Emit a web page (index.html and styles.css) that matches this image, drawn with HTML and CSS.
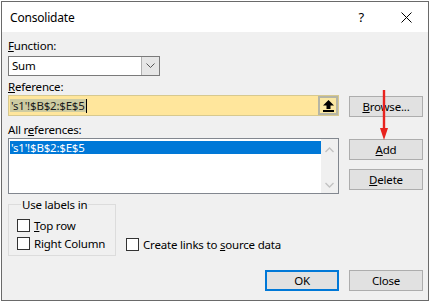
FILE: index.html
```html
<!DOCTYPE html>
<html lang="en">
<head>
    <meta charset="UTF-8">
    <title>Consolidate</title>
    <link rel="stylesheet" href="styles.css">
</head>
<body>
    <div class="dialog">
        <div class="titlebar">
            <span class="title">Consolidate</span>
            <span class="help">?</span>
            <svg class="close-x" width="11" height="11" viewBox="0 0 11 11">
                <path d="M0.5 0.5 L10.5 10.5 M10.5 0.5 L0.5 10.5" stroke="#000" stroke-width="1" fill="none"/>
            </svg>
        </div>

        <div class="content">
            <div class="lbl"><u>F</u>unction:</div>
            <div class="select">
                <span class="select-value">Sum</span>
                <span class="dd">
                    <svg width="9" height="6" viewBox="0 0 9 6"><path d="M0.5 0.5 L4.5 4.5 L8.5 0.5" stroke="#555" fill="none"/></svg>
                </span>
            </div>

            <div class="lbl lbl-gap"><u>R</u>eference:</div>
            <div class="row">
                <div class="ref-input">
                    <span class="ref-text"><span class="sel">'s1'!$B$2:$E$5</span><span class="caret"></span></span>
                    <span class="collapse">
                        <svg width="11" height="12" viewBox="0 0 11 12">
                            <path d="M5.5 0 L11 5.5 L7.5 5.5 L7.5 9 L3.5 9 L3.5 5.5 L0 5.5 Z" fill="#000"/>
                            <rect x="0" y="10" width="11" height="2" fill="#000"/>
                        </svg>
                    </span>
                </div>
                <button class="btn btn-browse"><u>B</u>rowse...</button>
            </div>

            <div class="lbl lbl-all">All r<u>e</u>ferences:</div>
            <div class="row">
                <div class="listbox">
                    <div class="list-items">
                        <div class="list-item selected">'s1'!$B$2:$E$5</div>
                    </div>
                    <div class="scrollbar">
                        <svg width="9" height="6" viewBox="0 0 9 6"><path d="M0.5 5 L4.5 1 L8.5 5" stroke="#c2c2c2" stroke-width="1.3" fill="none"/></svg>
                        <svg width="9" height="6" viewBox="0 0 9 6"><path d="M0.5 1 L4.5 5 L8.5 1" stroke="#c2c2c2" stroke-width="1.3" fill="none"/></svg>
                    </div>
                </div>
                <div class="side-buttons">
                    <button class="btn btn-add"><u>A</u>dd</button>
                    <button class="btn btn-delete"><u>D</u>elete</button>
                </div>
            </div>

            <div class="labels-row">
                <fieldset class="group">
                    <legend>Use labels in</legend>
                    <div class="check"><span class="box"></span><span><u>T</u>op row</span></div>
                    <div class="check"><span class="box"></span><span>Right Column</span></div>
                </fieldset>
                <div class="check check-links"><span class="box"></span><span>Create links to <u>s</u>ource data</span></div>
            </div>

            <div class="footer">
                <button class="btn btn-ok">OK</button>
                <button class="btn">Close</button>
            </div>
        </div>

        <svg class="red-arrow" width="10" height="52" viewBox="0 0 10 52">
            <path d="M5 1 L5 40" stroke="#e8231f" stroke-width="2.4"/>
            <path d="M1 39 L9 39 L5 51 Z" fill="#e8231f"/>
        </svg>
    </div>
</body>
</html>
```

FILE: styles.css
```css
body {
    margin: 0;
    background-color: #fff;
    font-family: "Noto Sans", "Segoe UI", sans-serif;
    font-size: 11.5px;
    letter-spacing: -0.2px;
    color: #000;
}

.dialog {
    position: relative;
    width: 426px;
    height: 298px;
    margin: 1px 0 0 1px;
    border: 1px solid #6a6a6a;
    background-color: #f0f0f0;
}

.titlebar {
    height: 30px;
    background-color: #fff;
    display: flex;
    align-items: center;
    padding: 0 16px 0 8px;
}

.title {
    flex: 1;
    font-size: 12px;
}

.help {
    margin-right: 37px;
    font-size: 13px;
}

.content {
    padding: 6px 5px 0 6px;
}

.lbl {
    line-height: 15px;
    margin-bottom: 3px;
}

.lbl-gap {
    margin-top: 3px;
    margin-bottom: 1px;
}

.lbl-all {
    margin-top: 5px;
    margin-bottom: 1px;
}

.select {
    width: 152px;
    height: 20px;
    box-sizing: border-box;
    border: 1px solid #7a7a7a;
    background-color: #fff;
    display: flex;
}

.select-value {
    flex: 1;
    padding-left: 3px;
    line-height: 18px;
}

.dd {
    width: 17px;
    border-left: 1px solid #b0b0b0;
    background-color: #e6e6e6;
    display: flex;
    align-items: center;
    justify-content: center;
}

.row {
    display: flex;
    align-items: flex-start;
    gap: 10px;
}

.ref-input {
    width: 331px;
    height: 21px;
    box-sizing: border-box;
    border: 1px solid #d7c98f;
    background-color: #ffe69c;
    display: flex;
    align-items: center;
}

.ref-text {
    flex: 1;
    display: flex;
    align-items: center;
    padding-left: 1px;
}

.sel {
    background-color: #cdcba2;
    color: #1a1a1a;
    line-height: 13px;
    padding: 0 1px;
}

.caret {
    width: 1px;
    height: 14px;
    background-color: #000;
}

.collapse {
    width: 20px;
    height: 19px;
    box-sizing: border-box;
    border: 2px solid #b5b5a5;
    background-color: #fbe8a2;
    display: flex;
    align-items: center;
    justify-content: center;
}

.btn {
    width: 74px;
    height: 21px;
    box-sizing: border-box;
    border: 1px solid #adadad;
    background-color: #e1e1e1;
    font-family: inherit;
    font-size: 11.5px;
    letter-spacing: -0.2px;
    color: #000;
    padding: 0;
}

.btn-browse {
    margin-top: 1px;
}

.listbox {
    width: 331px;
    height: 56px;
    box-sizing: border-box;
    border: 1px solid #82878f;
    background-color: #fff;
    display: flex;
}

.list-items {
    flex: 1;
    padding: 2px 0 0 1px;
}

.list-item {
    line-height: 13px;
    padding-left: 1px;
}

.list-item.selected {
    background-color: #0078d7;
    color: #fff;
}

.scrollbar {
    width: 17px;
    background-color: #f0f0f0;
    display: flex;
    flex-direction: column;
    justify-content: space-between;
    align-items: center;
    padding: 8px 0 5px;
}

.side-buttons {
    display: flex;
    flex-direction: column;
    gap: 9px;
    margin-top: 1px;
}

.labels-row {
    display: flex;
    align-items: flex-end;
    margin-top: 3px;
}

.group {
    width: 108px;
    box-sizing: border-box;
    margin: 0;
    padding: 4px 0 3px 8px;
    border: 1px solid #dcdcdc;
}

.group legend {
    padding: 0 1px;
    margin-left: 4px;
    line-height: 15px;
}

.check {
    display: flex;
    align-items: center;
    gap: 4px;
    height: 18px;
}

.box {
    width: 13px;
    height: 13px;
    box-sizing: border-box;
    border: 1px solid #333;
    background-color: #fff;
}

.check-links {
    margin-left: 10px;
    margin-bottom: 3px;
}

.footer {
    display: flex;
    justify-content: flex-end;
    gap: 10px;
    margin-top: 14px;
}

.btn-ok {
    border: 2px solid #0078d7;
}

.red-arrow {
    position: absolute;
    left: 377px;
    top: 87px;
}
```
